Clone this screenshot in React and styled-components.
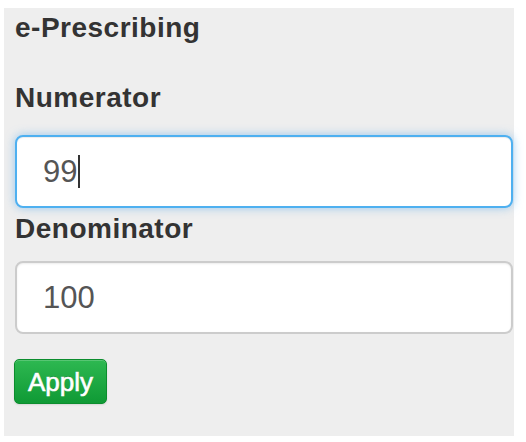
import React from "react";
import styled, { createGlobalStyle } from "styled-components";

const Global = createGlobalStyle`
  html, body { margin: 0; padding: 0; background: #ffffff; }
  body { font-family: "Liberation Sans", Arial, Helvetica, sans-serif; }
`;

const Page = styled.div`
  padding: 8px 12px 0 4px;
`;

const Panel = styled.section`
  width: 510px;
  box-sizing: border-box;
  background: #eeeeee;
  padding: 5px 1px 32px 11px;
  display: flex;
  flex-direction: column;
  align-items: stretch;
`;

const Title = styled.h2`
  margin: 0;
  font-size: 28px;
  line-height: 30px;
  font-weight: 700;
  letter-spacing: 0.5px;
  color: #333333;
`;

const Label = styled.label`
  display: block;
  margin-top: ${(p) => p.$top}px;
  font-size: 28px;
  line-height: 30px;
  font-weight: 700;
  letter-spacing: 0.5px;
  color: #333333;
`;

const Field = styled.div`
  box-sizing: border-box;
  height: 73px;
  margin-top: ${(p) => p.$top}px;
  display: flex;
  align-items: center;
  padding-left: 26px;
  background: #ffffff;
  border: 2px solid ${(p) => (p.$focused ? "#4eb0f0" : "#cccccc")};
  border-radius: 8px;
  box-shadow: ${(p) =>
    p.$focused
      ? "inset 0 1px 1px rgba(0,0,0,0.075), 0 0 10px rgba(82,168,236,0.55)"
      : "inset 0 1px 2px rgba(0,0,0,0.08)"};
  font-size: 31px;
  color: #555555;
`;

const Caret = styled.span`
  display: inline-block;
  width: 1.5px;
  height: 33px;
  margin-left: 1px;
  background: #333333;
`;

const Button = styled.button`
  align-self: flex-start;
  margin-top: 25px;
  margin-left: -1px;
  width: 93px;
  height: 45px;
  box-sizing: border-box;
  border: 1px solid #0c8d2e;
  border-radius: 5px;
  background: linear-gradient(#2eb851, #0f9a35);
  box-shadow: inset 0 1px 0 rgba(255,255,255,0.2), 0 1px 2px rgba(0,0,0,0.1);
  color: #ffffff;
  font-family: "Liberation Sans", Arial, sans-serif;
  font-size: 26px;
  font-weight: 400;
  -webkit-text-stroke: 0.6px #ffffff;
  line-height: 30px;
  padding: 0;
  text-shadow: 0 -1px 0 rgba(0,0,0,0.2);
`;

export default function App() {
  return (
    <>
      <Global />
      <Page>
        <Panel>
          <Title>e-Prescribing</Title>
          <Label $top={40}>Numerator</Label>
          <Field $top={22} $focused>
            99
            <Caret />
          </Field>
          <Label $top={6}>Denominator</Label>
          <Field $top={17}>100</Field>
          <Button>Apply</Button>
        </Panel>
      </Page>
    </>
  );
}
